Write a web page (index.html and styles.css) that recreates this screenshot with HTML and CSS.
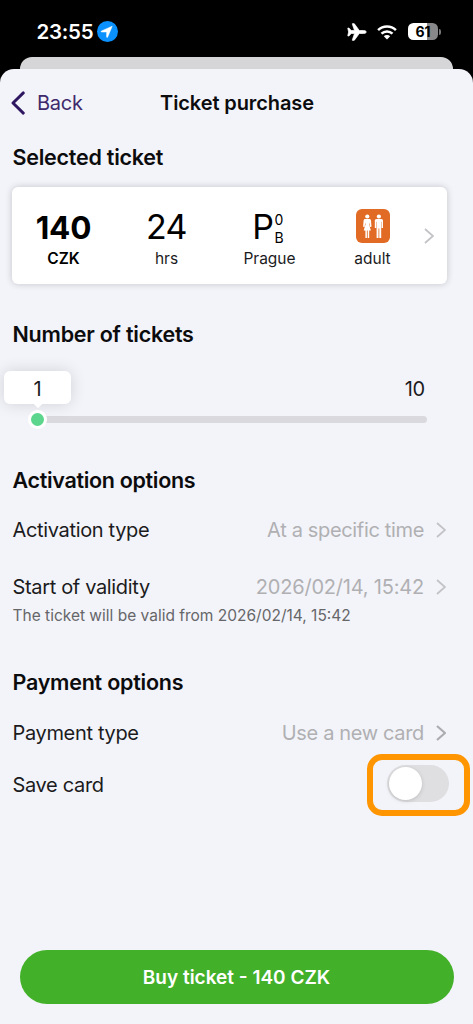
FILE: index.html
```html
<!DOCTYPE html>
<html lang="en">
<head>
<meta charset="utf-8">
<title>Ticket purchase</title>
<link rel="stylesheet" href="styles.css">
</head>
<body>
<div class="phone">
  <div class="status">
    <div class="status-left">
      <span class="time">23:55</span>
      <svg class="location" viewBox="0 0 21 21"><circle cx="10.5" cy="10.5" r="10.5" fill="#0a91ff"/><path d="M15.200 5.200 4.600 9.900c-.8.4-.6 1.100.1 1.100h4.600c.2 0 .3.100.3.300v4.500c0 .8.800.9 1.100.1z" fill="#fff" stroke="#fff" stroke-width=".5" stroke-linejoin="round"/></svg>
    </div>
    <div class="status-right">
      <svg class="plane" viewBox="0 0 20 18"><path d="M19.300 9c0-.9-1.300-1.500-2.700-1.500h-4.300L7.600 1.100C7.300.7 7 .6 6.500.6h-.9c-.3 0-.4.200-.3.500l2.200 6.400H4.200L2.300 5.300C2.100 5 1.900 5 1.600 5h-.5c-.3 0-.4.200-.3.400L1.600 9l-.8 3.600c-.1.200 0 .4.300.4h.5c.3 0 .5 0 .7-.3l1.900-2.200h3.300l-2.200 6.400c-.1.300 0 .5.300.5h.9c.5 0 .8-.1 1.100-.5l4.700-6.400h4.300c1.400 0 2.700-.6 2.700-1.500z" fill="#fff" stroke="#fff" stroke-width=".7"/></svg>
      <svg class="wifi" viewBox="0 0 20 16"><g fill="none" stroke="#fff" stroke-width="2.500"><path d="M1.100 6.200a12.700 12.700 0 0 1 17.800 0"/><path d="M4.500 9.700a7.800 7.800 0 0 1 11 0"/></g><path d="M10 15.500 6.800 12.300a4.600 4.600 0 0 1 6.400 0z" fill="#fff"/></svg>
      <div class="battery"><span class="level">61</span><i class="tip"></i></div>
    </div>
  </div>
  <div class="under-sheet"></div>
  <main class="sheet">
    <header class="nav">
      <a class="back"><svg class="back-icon" viewBox="0 0 14 24"><path d="M12.300 1.900 2 12l10.300 10.100" fill="none" stroke="#2e1760" stroke-width="2.900" stroke-linecap="round" stroke-linejoin="round"/></svg><span>Back</span></a>
      <h1 class="title">Ticket purchase</h1>
    </header>

    <h2 class="heading">Selected ticket</h2>
    <section class="ticket">
      <div class="cell price"><span class="value">140</span><span class="unit">CZK</span></div>
      <div class="cell"><span class="value">24</span><span class="unit">hrs</span></div>
      <div class="cell"><span class="value zone">P<span class="bands"><span>0</span><span>B</span></span></span><span class="unit">Prague</span></div>
      <div class="cell"><span class="value"><svg class="people" viewBox="0 0 34 34"><rect width="34" height="34" rx="6" fill="#e16a24"/><g fill="#fff"><circle cx="11.300" cy="7.500" r="2.100"/><path d="M9.200 10h4.200c1 0 1.500.6 1.600 1.500l.5 6.300-1.500.2-.7-4.700-.2 2.200 1.800 6h-1.700V29h-1.500v-7.500h-.8V29H9.400v-7.500H7.700l1.800-6-.2-2.200-.7 4.700-1.500-.2.500-6.300c.1-.9.600-1.500 1.600-1.500z"/><circle cx="22.900" cy="7.500" r="2.100"/><path d="M20.600 10h4.600c1.200 0 1.800.7 1.800 1.800V19h-1.400v-6.200h-.4V29h-1.900v-9.500h-.8V29h-1.900V12.800h-.4V19h-1.400v-7.200c0-1.100.6-1.800 1.800-1.800z"/></g></svg></span><span class="unit">adult</span></div>
      <svg class="chevron" viewBox="0 0 10 16"><path d="m1 1 8 7-8 7"/></svg>
    </section>

    <h2 class="heading spaced">Number of tickets</h2>
    <section class="slider">
      <div class="slider-labels"><span class="bubble">1</span><span class="max">10</span></div>
      <div class="track"><span class="thumb"></span></div>
    </section>

    <h2 class="heading activation">Activation options</h2>
    <div class="row row-type"><span>Activation type</span><span class="choice"><span>At a specific time</span><svg class="chevron" viewBox="0 0 10 16"><path d="m1 1 8 7-8 7"/></svg></span></div>
    <div class="row row-start"><span>Start of validity</span><span class="choice"><span class="date">2026/02/14, 15:42</span><svg class="chevron" viewBox="0 0 10 16"><path d="m1 1 8 7-8 7"/></svg></span></div>
    <p class="note">The ticket will be valid from 2026/02/14, 15:42</p>

    <h2 class="heading payment">Payment options</h2>
    <div class="row row-pay"><span>Payment type</span><span class="choice"><span>Use a new card</span><svg class="chevron strong" viewBox="0 0 10 16"><path d="m1 1 8 7-8 7"/></svg></span></div>
    <div class="row row-save"><span>Save card</span><span class="focus"><span class="switch"><i class="knob"></i></span></span></div>
    <div class="footer"><button class="buy">Buy ticket - 140 CZK</button></div>
  </main>
</div>
</body>
</html>
```
FILE: styles.css
```css
* { box-sizing: border-box; }
body { margin: 0; background: #000; font-family: Inter, "Liberation Sans", sans-serif; font-size: 20px; letter-spacing: -0.25px; color: #1b1b1d; }
.phone { height: 1024px; overflow: hidden; display: flex; flex-direction: column; }
.status { height: 57px; padding: 6px 32px 0 36.500px; display: flex; align-items: center; justify-content: space-between; }
.status-left, .status-right { display: flex; align-items: center; }
.status-left { gap: 4px; }
.time { color: #fff; font-size: 20.500px; font-weight: 600; }
.location { width: 21px; height: 21px; }
.plane { width: 20px; height: 18px; margin-right: 10px; }
.wifi { width: 20px; height: 16px; margin-right: 11px; }
.battery { display: flex; align-items: center; gap: 1px; }
.level { width: 30px; height: 17px; border-radius: 5.500px; background: linear-gradient(90deg, #fff 62%, #88888a 62%); color: #000; font-size: 14px; font-weight: 700; line-height: 17px; text-align: center; letter-spacing: 0; }
.tip { width: 2px; height: 6px; border-radius: 0 2px 2px 0; background: #77777a; }
.under-sheet { flex: none; height: 12px; margin: 0 20px; border-radius: 12px 12px 0 0; background: #d6d6d8; }
.sheet { flex: 1; display: flex; flex-direction: column; background: #f3f4f9; border-radius: 14px 14px 0 0; }
.nav { height: 68px; display: grid; grid-template-columns: 1fr auto 1fr; align-items: center; padding: 0 10px 0 11px; }
.back { display: flex; align-items: center; gap: 12px; color: #3f2a6c; }
.back-icon { width: 14px; height: 24px; }
.title { margin: 0; font-size: 20px; font-weight: 600; letter-spacing: -0.100px; color: #0c0c0e; }
.heading { margin: 0; padding-left: 12.500px; font-size: 21.500px; line-height: 40px; font-weight: 600; letter-spacing: -0.240px; color: #0c0c0e; }
.spaced { margin-top: 30px; }
.activation { letter-spacing: -0.320px; }
.ticket { margin: 10px 26px 0 12px; height: 97px; padding: 0 13px 0 0; border-radius: 6px; background: #fff; box-shadow: 0 0 7px rgba(0,0,0,.2); display: grid; grid-template-columns: repeat(4, 103px) 1fr; align-items: center; }
.cell { display: flex; flex-direction: column; align-items: center; padding-top: 6px; letter-spacing: 0; }
.value { height: 40px; display: flex; align-items: center; font-size: 34px; letter-spacing: -0.5px; color: #000; }
.unit { font-size: 15.500px; line-height: 24px; }
.price .value { font-size: 31.500px; font-weight: 700; letter-spacing: -0.2px; padding-top: 2px; }
.price .unit { font-weight: 600; color: #000; }
.zone { margin-left: -3px; }
.bands { display: flex; flex-direction: column; font-size: 14px; line-height: 18px; letter-spacing: 0; padding: 5px 0 0 1px; }
.people { width: 34px; height: 34px; margin-bottom: 2px; }
.chevron { width: 10px; height: 16px; fill: none; stroke: #c3c3c7; stroke-width: 1.800; justify-self: end; }
.strong { stroke: #acacb0; stroke-width: 2.200; }
.slider { height: 106px; padding: 17px 46px 0 4px; }
.slider-labels { display: flex; justify-content: space-between; align-items: center; }
.bubble { height: 33px; width: 67px; border-radius: 6px; background: #fff; box-shadow: 0 0 16px rgba(0,0,0,.14); display: flex; flex-direction: column; align-items: center; line-height: 36px; }
.bubble::after { content: ""; flex: none; margin-top: -6px; width: 6px; height: 6px; background: #fff; transform: rotate(45deg); }
.max { height: 33px; line-height: 36px; padding-right: 2px; }
.track { height: 7px; border-radius: 4px; background: #dadade; margin: 12px 0 0 34px; display: flex; align-items: center; }
.thumb { width: 19px; height: 19px; margin-left: -10px; border-radius: 50%; background: #5cd68d; border: 3px solid #fff; flex: none; }
.row { height: 40px; padding: 0 27px 0 12.500px; display: flex; align-items: center; justify-content: space-between; letter-spacing: -0.340px; }
.choice { display: flex; align-items: center; gap: 12px; color: #b0b0b3; }
.date { letter-spacing: -0.200px; }
.row-type { margin-top: 10px; }
.row-start { margin-top: 17px; }
.note { margin: 0; padding: 1px 0 0 12.500px; font-size: 15.500px; line-height: 16px; letter-spacing: 0; color: #666669; }
.payment { margin-top: 38px; }
.row-pay { margin-top: 11px; }
.row-save { margin-top: 1px; height: 62px; padding-right: 3px; }
.focus { width: 103px; height: 62px; border: 6px solid #ff9500; border-radius: 15px; padding: 0 0 3px 14px; display: flex; align-items: center; }
.switch { width: 62px; height: 37px; border-radius: 19px; background: #dfdfe2; padding: 2px; }
.knob { display: block; width: 33px; height: 33px; border-radius: 50%; background: #fff; box-shadow: 0 1px 4px rgba(0,0,0,.15); }
.footer { margin-top: auto; padding: 0 19.500px 20px; }
.buy { width: 100%; height: 54px; border: 0; padding: 0; border-radius: 27px; background: #43b02a; color: #fff; font: 600 19px Inter, sans-serif; display: block; }
```
